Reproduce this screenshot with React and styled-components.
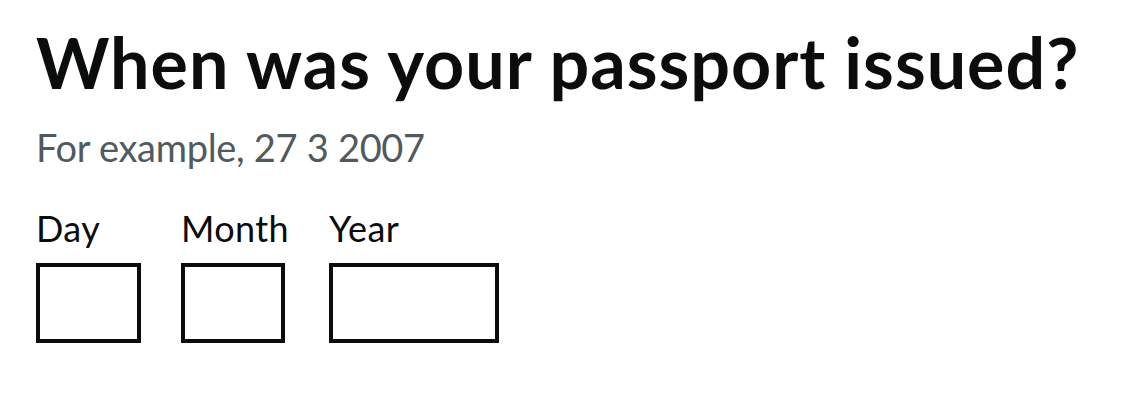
import React from 'react';
import styled, { createGlobalStyle } from 'styled-components';

const GlobalStyle = createGlobalStyle`
  html, body {
    margin: 0;
    padding: 0;
    background: #ffffff;
  }
  body {
    font-family: 'Lato', 'Liberation Sans', Arial, sans-serif;
    color: #0b0c0c;
  }
`;

const Page = styled.main`
  padding: 22px 36px 0 36px;
`;

const Fieldset = styled.fieldset`
  margin: 0;
  padding: 0;
  border: 0;
  min-width: 0;
`;

const Legend = styled.legend`
  margin: 0 0 20px 0;
  padding: 0;
  font-size: 70px;
  line-height: 80px;
  font-weight: 700;
  letter-spacing: 1px;
  color: #0b0c0c;
`;

const Hint = styled.div`
  margin: 0 0 31px 0;
  font-size: 38px;
  line-height: 50px;
  letter-spacing: -0.3px;
  color: #505a5f;
`;

// day / month / year row
const DateRow = styled.div`
  display: flex;
  align-items: flex-start;
  gap: 40px;
`;

const DateItem = styled.div`
  display: flex;
  flex-direction: column;
`;

const Label = styled.label`
  display: block;
  margin-bottom: 10px;
  font-size: 36px;
  line-height: 50px;
  letter-spacing: 0.4px;
  color: #0b0c0c;
`;

const DateInput = styled.input`
  box-sizing: border-box;
  width: ${(p) => p.$width}px;
  height: 80px;
  margin: 0;
  padding: 5px;
  border: 4px solid #0b0c0c;
  border-radius: 0;
  background: #ffffff;
  font-family: inherit;
  font-size: 38px;
  outline: none;
  appearance: none;
`;

const fields = [
  { id: 'day', label: 'Day', width: 105 },
  { id: 'month', label: 'Month', width: 104 },
  { id: 'year', label: 'Year', width: 170 },
];

export default function App() {
  return (
    <>
      <GlobalStyle />
      <Page>
        <Fieldset role="group">
          <Legend>When was your passport issued?</Legend>
          <Hint>For example, 27 3 2007</Hint>
          <DateRow>
            {fields.map((f) => (
              <DateItem key={f.id}>
                <Label htmlFor={`passport-issued-${f.id}`}>{f.label}</Label>
                <DateInput
                  id={`passport-issued-${f.id}`}
                  type="text"
                  inputMode="numeric"
                  $width={f.width}
                />
              </DateItem>
            ))}
          </DateRow>
        </Fieldset>
      </Page>
    </>
  );
}
